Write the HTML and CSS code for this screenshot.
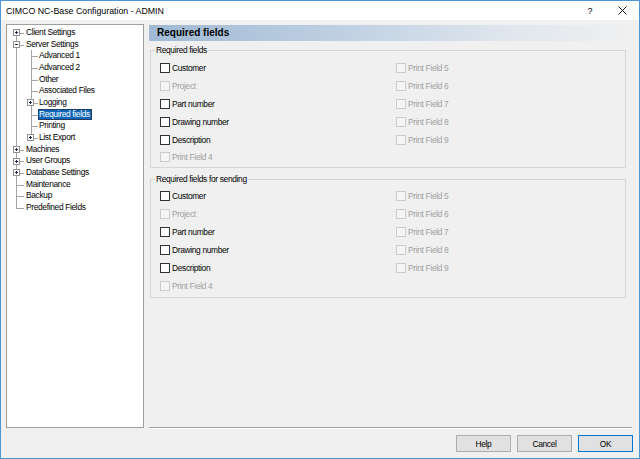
FILE: index.html
```html
<!DOCTYPE html>
<html>
<head>
<meta charset="utf-8">
<link rel="stylesheet" href="styles.css">
</head>
<body>
<div class="window">
  <div class="titlebar">
    <span class="title">CIMCO NC-Base Configuration - ADMIN</span>
    <span class="help">?</span>
    <span class="close"><svg width="9" height="9" viewBox="0 0 9 9"><path d="M0.5 0.5 L8.5 8.5 M8.5 0.5 L0.5 8.5" stroke="#111" stroke-width="1" fill="none"/></svg></span>
  </div>
  <div class="body">
    <div class="tree">
      <div class="row"><span class="c c-first"><svg class="exp" width="7" height="7" viewBox="0 0 7 7"><rect x="0.5" y="0.5" width="6" height="6" fill="#fff" stroke="#919191"/><path d="M2 3.5H5M3.5 2V5" stroke="#1b2b4a"/></svg></span><span class="lbl l0">Client Settings</span></div>
      <div class="row"><span class="c c-mid"><svg class="exp" width="7" height="7" viewBox="0 0 7 7"><rect x="0.5" y="0.5" width="6" height="6" fill="#fff" stroke="#919191"/><path d="M2 3.5H5" stroke="#1b2b4a"/></svg></span><span class="lbl l0">Server Settings</span></div>
      <div class="row"><span class="c c-pass"></span><span class="c c1 c-mid"></span><span class="lbl">Advanced 1</span></div>
      <div class="row"><span class="c c-pass"></span><span class="c c1 c-mid"></span><span class="lbl">Advanced 2</span></div>
      <div class="row"><span class="c c-pass"></span><span class="c c1 c-mid"></span><span class="lbl">Other</span></div>
      <div class="row"><span class="c c-pass"></span><span class="c c1 c-mid"></span><span class="lbl">Associated Files</span></div>
      <div class="row"><span class="c c-pass"></span><span class="c c1 c-mid"><svg class="exp" width="7" height="7" viewBox="0 0 7 7"><rect x="0.5" y="0.5" width="6" height="6" fill="#fff" stroke="#919191"/><path d="M2 3.5H5M3.5 2V5" stroke="#1b2b4a"/></svg></span><span class="lbl">Logging</span></div>
      <div class="row"><span class="c c-pass"></span><span class="c c1 c-mid"></span><span class="lbl sel">Required fields</span></div>
      <div class="row"><span class="c c-pass"></span><span class="c c1 c-mid"></span><span class="lbl">Printing</span></div>
      <div class="row"><span class="c c-pass"></span><span class="c c1 c-last"><svg class="exp" width="7" height="7" viewBox="0 0 7 7"><rect x="0.5" y="0.5" width="6" height="6" fill="#fff" stroke="#919191"/><path d="M2 3.5H5M3.5 2V5" stroke="#1b2b4a"/></svg></span><span class="lbl">List Export</span></div>
      <div class="row"><span class="c c-mid"><svg class="exp" width="7" height="7" viewBox="0 0 7 7"><rect x="0.5" y="0.5" width="6" height="6" fill="#fff" stroke="#919191"/><path d="M2 3.5H5M3.5 2V5" stroke="#1b2b4a"/></svg></span><span class="lbl l0">Machines</span></div>
      <div class="row"><span class="c c-mid"><svg class="exp" width="7" height="7" viewBox="0 0 7 7"><rect x="0.5" y="0.5" width="6" height="6" fill="#fff" stroke="#919191"/><path d="M2 3.5H5M3.5 2V5" stroke="#1b2b4a"/></svg></span><span class="lbl l0">User Groups</span></div>
      <div class="row"><span class="c c-mid"><svg class="exp" width="7" height="7" viewBox="0 0 7 7"><rect x="0.5" y="0.5" width="6" height="6" fill="#fff" stroke="#919191"/><path d="M2 3.5H5M3.5 2V5" stroke="#1b2b4a"/></svg></span><span class="lbl l0">Database Settings</span></div>
      <div class="row"><span class="c c-mid"></span><span class="lbl l0">Maintenance</span></div>
      <div class="row"><span class="c c-mid"></span><span class="lbl l0">Backup</span></div>
      <div class="row"><span class="c c-last"></span><span class="lbl l0">Predefined Fields</span></div>
    </div>
    <div class="main">
      <div class="banner">Required fields</div>
      <fieldset class="group g1">
        <legend>Required fields</legend>
        <div class="grid">
          <div class="item"><span class="cb"></span><span class="txt">Customer</span></div>
          <div class="item dis"><span class="cb"></span><span class="txt">Project</span></div>
          <div class="item"><span class="cb"></span><span class="txt">Part number</span></div>
          <div class="item"><span class="cb"></span><span class="txt">Drawing number</span></div>
          <div class="item"><span class="cb"></span><span class="txt">Description</span></div>
          <div class="item dis"><span class="cb"></span><span class="txt">Print Field 4</span></div>
          <div class="item dis"><span class="cb"></span><span class="txt">Print Field 5</span></div>
          <div class="item dis"><span class="cb"></span><span class="txt">Print Field 6</span></div>
          <div class="item dis"><span class="cb"></span><span class="txt">Print Field 7</span></div>
          <div class="item dis"><span class="cb"></span><span class="txt">Print Field 8</span></div>
          <div class="item dis"><span class="cb"></span><span class="txt">Print Field 9</span></div>
        </div>
      </fieldset>
      <fieldset class="group g2">
        <legend>Required fields for sending</legend>
        <div class="grid">
          <div class="item"><span class="cb"></span><span class="txt">Customer</span></div>
          <div class="item dis"><span class="cb"></span><span class="txt">Project</span></div>
          <div class="item"><span class="cb"></span><span class="txt">Part number</span></div>
          <div class="item"><span class="cb"></span><span class="txt">Drawing number</span></div>
          <div class="item"><span class="cb"></span><span class="txt">Description</span></div>
          <div class="item dis"><span class="cb"></span><span class="txt">Print Field 4</span></div>
          <div class="item dis"><span class="cb"></span><span class="txt">Print Field 5</span></div>
          <div class="item dis"><span class="cb"></span><span class="txt">Print Field 6</span></div>
          <div class="item dis"><span class="cb"></span><span class="txt">Print Field 7</span></div>
          <div class="item dis"><span class="cb"></span><span class="txt">Print Field 8</span></div>
          <div class="item dis"><span class="cb"></span><span class="txt">Print Field 9</span></div>
        </div>
      </fieldset>
      <div class="spacer"></div>
      <div class="sep"></div>
    </div>
  </div>
  <div class="buttons">
    <button class="btn">Help</button>
    <button class="btn">Cancel</button>
    <button class="btn default">OK</button>
  </div>
</div>
</body>
</html>
```
FILE: styles.css
```css
* { box-sizing: border-box; }
html, body { margin: 0; padding: 0; }
body {
  width: 640px;
  height: 459px;
  overflow: hidden;
  font-family: "Liberation Sans", Arial, sans-serif;
  font-size: 8.4px;
  letter-spacing: -0.33px;
  color: #000;
}
.window {
  width: 640px;
  height: 459px;
  border: 1px solid #4a96d6;
  background: #f0f0f0;
  display: flex;
  flex-direction: column;
}
.titlebar {
  height: 19px;
  background: #fff;
  display: flex;
  align-items: center;
  flex: none;
}
.title {
  font-size: 8.8px;
  letter-spacing: 0;
  padding-left: 5px;
  flex: 1;
}
.help {
  width: 30px;
  text-align: center;
  font-size: 9px;
  letter-spacing: 0;
}
.close {
  width: 34px;
  height: 19px;
  display: flex;
  align-items: center;
  justify-content: center;
}
.body {
  flex: none;
  height: 409px;
  display: flex;
  padding: 4px 5px 0 5px;
  gap: 5px;
}
.tree {
  width: 138px;
  height: 404px;
  background: #fff;
  border: 1px solid #a0a0a0;
  padding: 2px 0 0 1px;
  flex: none;
}
.row {
  height: 11.67px;
  display: flex;
  align-items: stretch;
  white-space: nowrap;
}
.c {
  width: 16px;
  flex: none;
  display: flex;
  align-items: center;
  justify-content: center;
  background-repeat: no-repeat;
  --cx: 8px;
}
.c.c1 { width: 14px; --cx: 7px; }
.c .exp { display: block; }
.c.c1 .exp { margin-left: -1px; }
.c-pass {
  background-image: linear-gradient(#a5a5a5, #a5a5a5);
  background-size: 1px 100%;
  background-position: var(--cx) 0;
}
.c-mid {
  background-image: linear-gradient(#a5a5a5, #a5a5a5), linear-gradient(#a5a5a5, #a5a5a5);
  background-size: 1px 100%, calc(100% - var(--cx)) 1px;
  background-position: var(--cx) 0, right 6px;
}
.c-first {
  background-image: linear-gradient(#a5a5a5, #a5a5a5), linear-gradient(#a5a5a5, #a5a5a5);
  background-size: 1px 50%, calc(100% - var(--cx)) 1px;
  background-position: var(--cx) 100%, right 6px;
}
.c-last {
  background-image: linear-gradient(#a5a5a5, #a5a5a5), linear-gradient(#a5a5a5, #a5a5a5);
  background-size: 1px 6px, calc(100% - var(--cx)) 1px;
  background-position: var(--cx) 0, right 6px;
}
.lbl {
  line-height: 9.67px;
  border: 1px solid transparent;
  padding: 0 1px 0 0;
}
.lbl.l0 { margin-left: 1px; }
.lbl.sel {
  background: #0b66b9;
  border-color: #203f66;
  color: #fff;
}
.main {
  flex: 1;
  display: flex;
  flex-direction: column;
  padding-top: 1px;
}
.banner {
  height: 16px;
  flex: none;
  background: linear-gradient(to right, #9fb9d5 0%, #c0d0e2 40%, #e0e7ee 75%, #f0f0f0 100%);
  font-weight: bold;
  font-size: 10px;
  letter-spacing: 0;
  line-height: 16px;
  padding-left: 8px;
  color: #000;
}
.group {
  margin: 0 8px 0 1px;
  border: 1px solid #d6d6d6;
  padding: 4px 0 1px 9px;
  min-width: 0;
  flex: none;
}
.group.g1 { margin-top: 4px; }
.group.g2 { margin-top: 6px; padding-top: 3px; padding-bottom: 2px; }
.group legend {
  padding: 0 1px;
  margin-left: -5px;
  line-height: 10px;
}
.grid {
  display: grid;
  grid-auto-flow: column;
  grid-template-rows: repeat(6, 17.9px);
  grid-template-columns: 236px 1fr;
}
.item {
  display: flex;
  align-items: center;
}
.cb {
  width: 10px;
  height: 10px;
  border: 1px solid #333;
  background: #fff;
  flex: none;
}
.txt { margin-left: 2px; }
.item.dis .cb { border-color: #cccccc; background: #f5f5f5; }
.item.dis .txt { color: #a0a0a0; }
.spacer { flex: 1; }
.sep {
  height: 2px;
  flex: none;
  margin-right: 2px;
  border-top: 1px solid #a0a0a0;
  border-bottom: 1px solid #fff;
}
.buttons {
  flex: none;
  display: flex;
  justify-content: flex-end;
  gap: 6px;
  padding: 6px 6px 0 0;
}
.btn {
  width: 55px;
  height: 17px;
  font-family: "Liberation Sans", Arial, sans-serif;
  font-size: 8.4px;
  letter-spacing: -0.33px;
  background: #e1e1e1;
  border: 1px solid #adadad;
  padding: 0;
  margin: 0;
  color: #000;
}
.btn.default { border-color: #0078d7; }
```
